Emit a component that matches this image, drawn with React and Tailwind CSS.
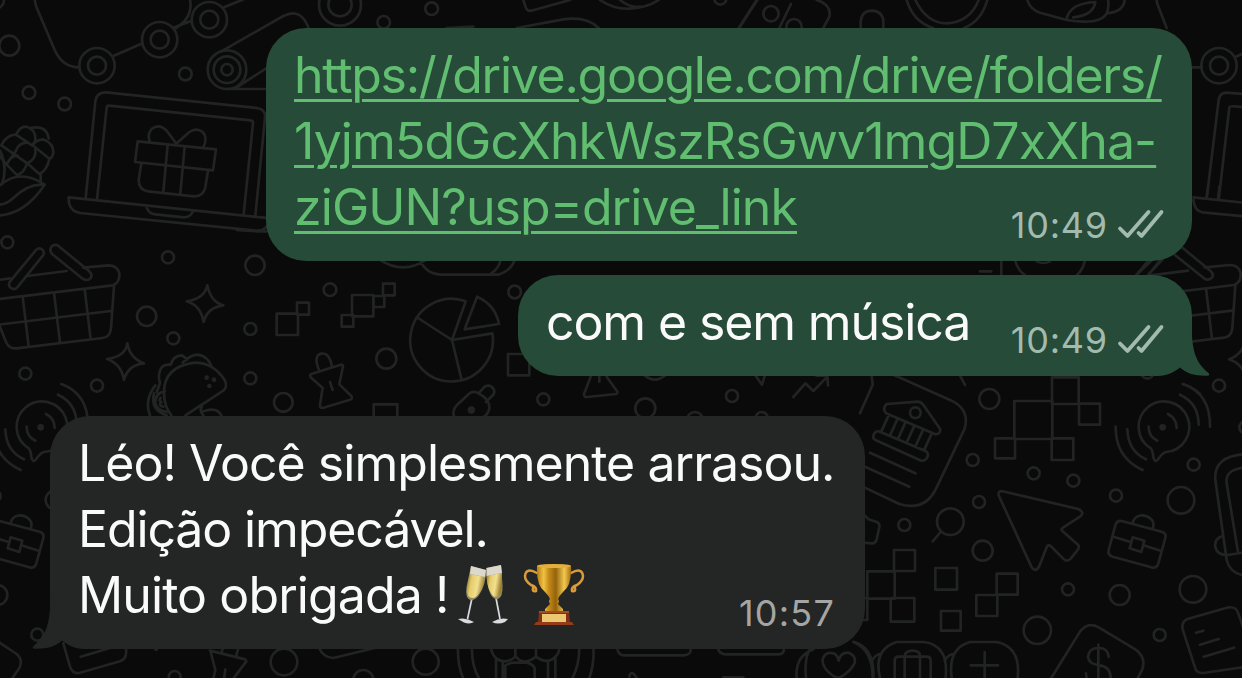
const Dots = ({ items }) => items.map(([x, y, r], i) => <circle key={i} cx={x} cy={y} r={r} />);
const Boxes = ({ items }) => items.map(([x, y, w, h], i) => <rect key={i} x={x} y={y} width={w} height={h || w} />);

const Basket = () => (
  <>
    <path d="M-20 152L30 145M82 138L200 123M250 113L325 106Q352 106 358 130Q360 158 338 166L-20 209" />
    <path d="M342 168L333 295Q330 322 308 324L50 355Q28 358 18 336L-8 270M-20 286L332 243M68 200L86 350M162 188L180 338M254 177L272 328" />
    <path d="M108 60Q118 50 128 60Q136 70 126 80L52 172Q42 182 32 173Q22 164 32 152ZM156 72Q146 60 156 48Q168 40 178 50L268 124Q280 136 270 146Q260 154 248 146Z" />
  </>
);

const Broadcast = () => (
  <>
    <path d="M872 235A76 76 0 1 1 918 246Q908 248 894 268Q884 280 880 262Q878 240 872 235Z" />
    <path d="M924 132Q950 146 950 174M866 170Q866 200 892 212M960 74Q1016 100 1016 164M970 42Q1052 72 1050 170M802 178Q804 244 858 268M767 170Q766 262 848 300" />
    <circle cx="908" cy="172" r="6" fill="#222323" />
  </>
);

const Briefcase = () => (
  <>
    <path d="M785 453L905 485Q920 490 916 504L895 580Q890 596 874 592L758 560Q742 555 746 540L766 466Q771 450 785 453ZM763 501L812 516M850 526L902 542M818 460C824 430 856 432 872 446Q884 456 879 472" />
    <path d="M818 502L853 512L844 546L809 535Z" />
  </>
);

const Wallpaper = () => (
  <svg
    className="absolute inset-0 h-[678px] w-[1242px]"
    viewBox="0 0 3726 2034"
    fill="none"
    stroke="#222323"
    strokeWidth="8"
    strokeLinecap="round"
    strokeLinejoin="round"
    aria-hidden="true"
  >
    <g>
      <path d="M104 -10Q104 12 112 28L165 152Q188 202 238 202M340 168L428 130M524 82L575 62M528 84Q584 50 568 -10M672 22L740 -6" />
      <Dots items={[[291, 197, 53], [291, 197, 27], [479, 119, 53], [479, 119, 27], [628, 59, 53], [628, 59, 27], [28, 137, 30], [87, 278, 19], [194, 312, 19], [556, 222, 19], [-14, 0, 26], [681, 209, 58], [681, 209, 40], [681, 209, 17]]} />
      <path d="M664 154L850 48Q905 20 928 90M710 262L830 185M681 267H820" />
      <path d="M257 594L286 304Q290 276 318 277L770 324Q797 328 795 352L766 648M291 598L320 322Q321 316 328 317L752 361Q760 362 759 370L731 642M206 592L820 656M206 592Q204 632 240 639L770 692Q800 694 810 660M440 624Q448 642 466 643L552 652Q570 652 578 636" />
      <path d="M413 424L648 448L639 511L405 486ZM503 434L490 576M554 440L541 580M424 490L416 540Q416 570 444 574L582 589Q610 590 616 562L624 512M528 430L500 392Q478 370 456 386Q440 402 450 428M528 432L568 396Q590 382 608 396Q624 412 610 442" />
      <path d="M48 404Q60 378 80 380Q108 388 106 420Q104 430 96 436L48 404M92 384Q140 374 146 416M98 436Q106 420 130 418Q160 430 160 456Q158 474 148 476L98 436M48 452Q56 428 82 428M106 448Q110 476 82 490L4 436Q20 404 48 404M148 476Q142 510 118 522L82 490M48 452L20 492M20 494Q30 468 52 466M80 492Q74 516 52 526L20 494M122 520V546M0 452Q24 500 6 552M0 470L20 494" />
      <path d="M0 556Q60 504 134 554Q76 640 0 646M134 554Q84 550 40 594Q20 612 0 614" />
    </g>

    <g transform="translate(0 690)">
      <Basket />
      <Dots items={[[22, 37, 18], [504, 82, 18], [765, 106, 29], [440, 259, 29], [520, 325, 18], [751, 297, 18], [751, 445, 18], [76, 431, 18], [291, 467, 18], [850, 517, 28]]} />
      <path d="M622 166Q632 216 670 226Q622 232 611 276Q602 226 560 214Q614 206 622 166ZM382 340Q390 386 432 400Q384 404 372 450Q364 402 321 387Q376 380 382 340Z" />
      <path d="M556 556L670 482Q684 470 674 450Q640 398 584 398Q490 410 492 490Q492 528 514 556M470 486L480 460Q472 430 484 414Q492 402 512 404Q520 376 546 376L562 388M548 398Q572 374 594 374Q624 380 634 408M466 466Q432 510 450 556M462 490Q450 540 500 556M494 484Q464 490 466 520Q470 540 500 546M482 504Q474 512 484 516Q474 528 490 530M606 530Q596 540 610 556M610 544Q650 530 664 556" />
      <g fill="#222323" stroke="none"><circle cx="620" cy="443" r="7" /><circle cx="642" cy="449" r="7" /><circle cx="628" cy="468" r="7" /></g>
      <path d="M710 0Q760 4 800 4" />
    </g>
    <g transform="translate(-786 1110)"><Broadcast /></g>
    <g transform="translate(-786 1110)"><Briefcase /></g>

    <g transform="translate(780 750)">
      <Boxes items={[[50, 191, 64], [111, 158, 36], [276, 135, 64], [340, 138, 33], [369, 101, 35], [245, 195, 35], [744, 312, 64], [341, 463, 71]]} />
      <Dots items={[[210, 119, 19], [764, 126, 19], [379, 326, 30]]} />
      <path d="M617 154A124 124 0 1 0 697 250L576 270ZM576 270L474 204M576 270L604 386M651 140L614 238L717 222Q706 164 651 140Z" />
      <path d="M358 28Q430 76 500 28M480 32Q500 72 540 74H715Q752 64 764 30M694 70Q716 56 722 30" />
      <path d="M154 372L242 344Q252 344 248 354L238 403L274 438Q280 446 268 450L188 474Q178 474 180 464L188 414L152 382Q148 374 154 372ZM176 358Q160 316 184 311Q208 306 216 350M210 396L218 420" />
      <path d="M582 500Q576 480 590 466L624 434Q638 420 656 430Q690 448 688 474Q686 490 672 500M656 430L674 410Q690 402 700 416Q708 430 694 440L678 456" />
      <circle cx="634" cy="480" r="7" fill="#222323" />
    </g>

    <g transform="translate(1500 1080)">
      <path d="M272 50L252 102Q252 112 262 111L348 102Q356 98 350 92L320 50M298 50V65M430 42Q462 74 496 46M766 46L786 74L794 48M880 111L916 70L940 93L982 50M950 48L982 46L984 76" />
      <Dots items={[[130, 118, 18], [436, 145, 30], [696, 108, 18], [585, 180, 24], [785, 174, 18]]} />
    </g>

    <g transform="translate(2580 1110)">
      <path d="M0 130L38 44L34 10M90 10L275 92Q330 120 314 176L230 352Q196 426 118 402L0 346M300 16L315 45M30 248L166 310M10 288L148 350" />
      <path d="M80 102L174 95Q182 96 188 102L240 176Q244 192 226 193L78 130Q66 116 80 102ZM56 184L198 244Q206 250 203 260Q196 274 184 272L46 210Q36 204 42 192Q48 182 56 184ZM86 136L64 184M112 148L90 196M136 158L114 207M162 170L140 218M188 182L166 230M214 193L192 241" />
      <Dots items={[[166, 128, 16], [388, 87, 30], [338, 270, 18], [521, 310, 18], [640, 332, 18], [357, 396, 18], [133, 465, 18], [271, 455, 40], [368, 542, 30], [768, 377, 18], [963, 391, 40], [1001, 284, 18], [1077, 47, 18], [624, 658, 18], [779, 675, 30], [999, 658, 40], [532, 781, 41], [899, 795, 18], [1156, 172, 18], [862, 8, 18]]} />
      <Boxes items={[[463, 93, 114], [576, 22, 80], [657, 101, 63], [405, 205, 60], [575, 205, 65], [22, 604, 82], [102, 540, 63], [92, 684, 71], [226, 594, 65], [410, 611, 63], [349, 675, 63], [243, 723, 59], [-44, 684, 66]]} />
      <path d="M424 363L655 417Q676 426 660 440L610 472Q600 478 608 484L654 524Q660 532 652 541L632 566Q622 576 612 568L572 528Q564 522 560 532L538 588Q526 610 514 590L416 376Q414 364 424 363ZM242 486L218 514" />
      <path d="M14 436L26 448L50 456Q60 460 58 472L50 508Q46 522 34 520L10 518" />
      <Broadcast />
      <Briefcase />
      <path d="M1160 252Q1060 256 1066 330L1100 570Q1110 612 1160 618M1160 292Q1094 296 1100 340L1134 546M1160 546L1104 555M1088 498Q1062 506 1066 532Q1072 556 1104 555" />
      <path d="M1160 890L1030 909Q1012 910 1006 896L968 778Q964 756 980 748L1106 712Q1128 710 1134 728L1160 800M1008 788L1030 782M1020 824L1076 807M1031 860L1122 833" />
      <path d="M570 930L660 785Q684 754 716 772L826 838Q860 862 846 900L830 930M715 824V930M746 860Q744 834 716 834Q686 834 684 860Q686 882 716 886Q754 888 752 930M678 910L680 930" />
      <path d="M-20 816Q40 840 38 930M62 930Q36 840 110 816H190Q270 824 256 930M276 930Q260 836 330 816H410Q486 832 472 930M36 872Q46 854 60 852M254 872Q264 854 280 852M332 886H414M374 846V930M134 858Q136 842 158 842Q180 842 180 858M134 858V930M180 858V930M104 930V872Q104 860 116 860H200Q212 860 212 872V930" />
    </g>

    <g transform="translate(0 1320)">
      <Dots items={[[-8, 465, 30], [112, 584, 18], [166, 180, 29], [-14, 168, 16], [524, 711, 18]]} />
      <path d="M-10 602L50 642Q70 660 58 684L36 716M190 610L210 680Q218 704 240 698L360 664Q382 656 378 626M242 650L330 624M630 632L736 658Q742 664 736 668L700 716M632 636L646 690L640 716M664 640L668 626M708 650L714 628M676 688L672 716M466 628L470 630" />
    </g>

    <g transform="translate(840 1680)">
      <Dots items={[[437, 305, 39], [12, 306, 40], [250, 360, 30]]} />
      <path d="M116 262Q130 294 160 294L284 264M534 262Q532 320 552 360M576 262Q574 320 600 360M940 262Q944 310 926 360M898 262Q898 320 874 360M632 262Q640 304 676 304Q700 300 706 288Q730 320 768 290Q802 316 826 290Q838 280 838 262M706 262V290M768 262V290M648 300V360M668 310V360M804 308V360M826 296V360M676 360V316Q690 308 704 308H740Q764 314 764 328V360" />
    </g>

    <g transform="translate(2940 570)">
      <path d="M640 22L790 38M640 30Q644 64 668 67L790 79M680 22L684 -8M714 26L718 -10M0 244H34M64 214V254M106 214Q116 244 134 254M314 214Q308 240 290 256M170 214Q190 224 210 214M470 254L520 206M505 254L548 208" />
      <g transform="translate(424 119)"><Basket /></g>
      <path d="M748 508Q780 494 790 470M748 508Q780 520 790 544M608 582Q640 592 660 612" />
    </g>

    <g transform="translate(780 0)">
      <Dots items={[[240, 14, 63], [240, 14, 35], [515, 26, 19], [371, 67, 19], [1381, -4, 18]]} />
      <path d="M788 -6L798 24Q802 34 814 32L930 0M1020 0Q1060 28 1110 26Q1160 24 1196 0M1080 0Q1110 24 1140 20M770 84L910 58Q980 48 1016 84M1436 84L1490 0M560 84L640 80" />
    </g>

    <g transform="translate(2220 0)">
      <Dots items={[[93, 41, 23], [162, 80, 23], [1437, 197, 53], [1437, 197, 27]]} />
      <path d="M0 80L52 0M153 12L118 84M230 0Q276 14 268 50L250 84M362 84V64Q366 32 396 32Q428 34 430 64V84M500 0Q520 66 580 84M742 0Q724 64 672 84M526 0Q560 70 620 70Q690 66 716 0M862 0Q870 28 900 38L980 60Q1080 76 1100 40Q1150 36 1154 0M980 56Q990 10 1066 6Q1060 46 1000 52M1100 40Q1108 20 1104 0M1250 0Q1250 10 1256 22L1280 84M1358 202H1386M1484 172L1510 160M1400 595L1436 300Q1440 278 1460 278L1510 282M1436 600L1468 322Q1470 316 1510 322" />
    </g>

    <g transform="translate(1800 1740)">
      <path d="M52 206Q54 226 74 226H252Q274 224 272 206M354 206Q358 222 376 223H536Q552 222 552 206M88 290Q90 274 102 282L110 294M370 292H430M764 186Q824 206 820 294M640 208Q584 230 590 294M632 204Q612 230 618 294M700 288Q664 262 668 238Q676 214 700 220Q712 224 716 242Q722 216 746 218Q768 226 764 248Q752 276 716 294Z" />
    </g>
  </svg>
);

const Ticks = () => (
  <svg className="ml-[9px] h-[32px] w-[48px]" viewBox="0 0 48 32" fill="none" stroke="#a3bbaf" strokeWidth="3.8" strokeLinecap="round" strokeLinejoin="round" role="img" aria-label="Entregue">
    <path d="M3 19.5L10.500 27L31.500 3M21.500 24L24.500 27L44.500 3" />
  </svg>
);

const Glasses = () => (
  <svg className="ml-[8px] h-[60px] w-[52px] shrink-0" viewBox="0 0 52 60" role="img" aria-label="Brinde">
    <defs>
      <linearGradient id="wine" x1="0" x2="1" y1="0" y2=".25">
        <stop offset="0" stopColor="#8f7428" />
        <stop offset=".3" stopColor="#e5cd69" />
        <stop offset=".65" stopColor="#f2df92" />
        <stop offset="1" stopColor="#9c7f2b" />
      </linearGradient>
    </defs>
    <path d="M15 33L10.5 54" stroke="#d9dcde" strokeWidth="1.7" fill="none" />
    <path d="M1 54Q9 52 17 57Q13 59.500 7 57.500Z" fill="#d9dcde" />
    <path d="M14 1L29 5Q29 20 22 30Q18 36 13 35Q8 33 9.500 22Z" fill="#948b69" />
    <path d="M13 9L28 12Q26 24 21.500 29Q17 35 12.500 32Q9 30 10.500 20Z" fill="url(#wine)" />
    <path d="M14 1L29 5L28 12L13 9Z" fill="#dcd9cc" />
    <path d="M39 33L43 54" stroke="#d9dcde" strokeWidth="1.700" fill="none" />
    <path d="M35 57Q43 52 51 54L48 57Q41 60 35 57Z" fill="#d9dcde" />
    <path d="M44 0L29.500 3Q29 18 33 28Q36 35 41 34Q46 32 45.500 20Z" fill="#948b69" />
    <path d="M45 8L29.500 11Q30 22 34 28Q37 34 41.500 31Q45 29 45 20Z" fill="url(#wine)" />
    <path d="M44 0L29.500 3V11L45 8Z" fill="#dcd9cc" />
  </svg>
);

const Trophy = () => (
  <svg className="ml-[14px] h-[64px] w-[62px] shrink-0" viewBox="0 0 62 64" role="img" aria-label="Troféu">
    <defs>
      <linearGradient id="gold" x1="0" x2="1">
        <stop offset="0" stopColor="#b87d13" />
        <stop offset=".2" stopColor="#f0c243" />
        <stop offset=".35" stopColor="#c48a1a" />
        <stop offset=".55" stopColor="#93620c" />
        <stop offset=".8" stopColor="#f3c84f" />
        <stop offset="1" stopColor="#a56c10" />
      </linearGradient>
    </defs>
    <path d="M14 10Q3 4 2 13Q2 18 8 22Q14 24 13 28Q9 29 10 25M48 10Q59 4 60 13Q60 18 54 22Q48 24 49 28Q53 29 52 25" fill="none" stroke="#d99b3c" strokeWidth="2.500" strokeLinecap="round" />
    <path d="M14 3Q31 -1 48 3Q49 23 40 29Q36 33 35 36Q37 38 35 41L40 46V50H22V46L27 41Q25 38 27 36Q26 33 22 29Q13 23 14 3Z" fill="url(#gold)" />
    <ellipse cx="31" cy="3" rx="17" ry="2" fill="#e3b13b" />
    <path d="M16 48H46L47 60H15Z" fill="#803014" />
    <path d="M13 59H49L51 62H11Z" fill="#963b19" />
    <path d="M16 48H46V50H16Z" fill="#a44c24" />
    <path d="M19 51H43V59H19Z" fill="#edc873" />
  </svg>
);

const Tail = ({ className, fill }) => (
  <svg className={className} viewBox="0 0 56 56" fill={fill} aria-hidden="true">
    <path d="M37.500 0C37.500 30 41 42 54.500 53Q56.500 56 53 55.700C42 56 33 54 26 47.500C20 52 13 56 4 56H0V0Z" />
  </svg>
);

const Receipt = () => (
  <footer className="absolute right-[27px] bottom-[20px] flex h-[32px] items-center text-[36px] leading-[32px] text-[#a3bbaf]">
    <time className="tracking-[0.8px]">10:49</time>
    <Ticks />
  </footer>
);

export default function App() {
  return (
    <main className="relative h-[678px] w-[1242px] overflow-hidden bg-[#0a0a0a] font-['Inter',sans-serif]">
      <Wallpaper />
      <section className="relative flex flex-col pt-[28px] pr-[50px] pl-[50px] text-[50px] leading-[66px] whitespace-nowrap">
        <article className="relative h-[233px] w-[926px] self-end rounded-[40px] bg-[#264b39] pt-[14px] pl-[28px]">
          <a className="block text-[#61bd70] underline decoration-[3px] underline-offset-[6px]">
            <span className="block tracking-[-1.28px]">https://drive.google.com/drive/folders/</span>
            <span className="block tracking-[-0.92px]">1yjm5dGcXhkWszRsGwv1mgD7xXha-</span>
            <span className="block tracking-[-0.92px]">ziGUN?usp=drive_link</span>
          </a>
          <Receipt />
        </article>
        <article className="relative mt-[14px] h-[101px] w-[674px] self-end rounded-[40px] bg-[#264b39] pt-[14px] pl-[28px]">
          <Tail className="absolute -right-[18px] bottom-0 size-[56px]" fill="#264b39" />
          <p className="relative tracking-[-1.12px] text-[#fafafa]">com e sem música</p>
          <Receipt />
        </article>
        <article className="relative mt-[40px] h-[233px] w-[815px] rounded-[40px] bg-[#242625] pt-[14px] pl-[28px] text-[#fafafa]">
          <Tail className="absolute bottom-0 -left-[18px] size-[56px] -scale-x-100" fill="#242625" />
          <p className="relative tracking-[-0.97px]">Léo! Você simplesmente arrasou.</p>
          <p className="relative tracking-[-1.12px]">Edição impecável.</p>
          <p className="relative flex h-[66px] items-center tracking-[-0.9px]">
            <span>Muito obrigada !</span>
            <Glasses />
            <Trophy />
          </p>
          <time className="absolute right-[30px] bottom-[20px] text-[36px] leading-[32px] tracking-[1.2px] text-[#a4a5a4]">10:57</time>
        </article>
      </section>
    </main>
  );
}
